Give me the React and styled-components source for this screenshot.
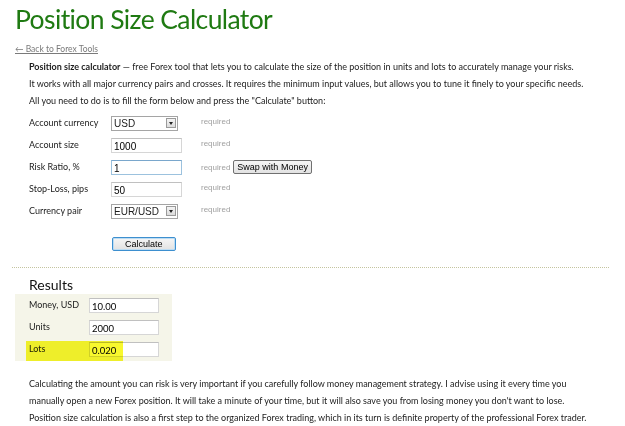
import React from 'react';
import styled, { createGlobalStyle } from 'styled-components';

const GlobalStyle = createGlobalStyle`
  body {
    margin: 0;
    background: #fff;
    font-family: Lato, 'DejaVu Sans', sans-serif;
    color: #1c1c1c;
  }
`;

const Page = styled.div`
  width: 625px;
  height: 426px;
  overflow: hidden;
  padding: 0 0 0 15px;
  box-sizing: border-box;
`;

const Title = styled.h1`
  margin: 0;
  padding-top: 2px;
  font-size: 26.5px;
  letter-spacing: -0.6px;
  font-weight: normal;
  line-height: 34px;
  color: #1f7a12;
`;

const BackLink = styled.a`
  display: inline-block;
  margin-top: 1px;
  font-size: 8.5px;
  line-height: 12px;
  color: #7a7a7a;
  text-decoration: underline;
`;

const Content = styled.div`
  padding-left: 14px;
`;

const Intro = styled.p`
  margin: 3px 0 0;
  font-size: 9px;
  line-height: 17px;
  white-space: nowrap;
  b {
    font-weight: bold;
  }
`;

const Form = styled.div`
  margin-top: 3px;
  display: grid;
  grid-template-columns: 82px 90px auto;
  grid-auto-rows: 22px;
  align-items: center;
`;

const Label = styled.div`
  font-size: 9px;
  margin-top: -2px;
`;

const Field = styled.div`
  display: flex;
  align-items: center;
`;

const Required = styled.div`
  display: flex;
  align-items: center;
  gap: 3px;
  font-family: 'Liberation Sans', sans-serif;
  font-size: 8px;
  color: #a0a0a0;
  span {
    margin-top: ${(p) => (p.$withButton ? '1px' : '-4px')};
  }
`;

const TextInput = styled.div`
  width: ${(p) => p.$width || 71}px;
  height: 15px;
  box-sizing: border-box;
  border: 1px solid ${(p) => (p.$focus ? '#9cc2de' : '#d6d6d6')};
  border-top-color: ${(p) => (p.$focus ? '#7aa7cc' : '#c0c0c0')};
  background: #fff;
  font-family: ${(p) => (p.$body ? 'Lato, sans-serif' : "'Liberation Sans', Arial, sans-serif")};
  font-size: ${(p) => (p.$body ? 9.5 : 10)}px;
  line-height: 15px;
  padding-left: 2px;
  color: #000;
`;

const Select = styled.div`
  width: 67px;
  height: 15px;
  box-sizing: border-box;
  border: 1px solid #a5a5a5;
  background: #fff;
  display: flex;
  align-items: center;
  justify-content: space-between;
  font-family: 'Liberation Sans', Arial, sans-serif;
  font-size: 10px;
  padding-left: 2px;
  padding-right: 1px;
`;

const Arrow = styled.div`
  width: 10px;
  height: 10px;
  box-sizing: border-box;
  border: 1px solid #9a9a9a;
  background: linear-gradient(#f4f4f4, #dcdcdc);
  display: flex;
  align-items: center;
  justify-content: center;
  &::after {
    content: '';
    border-left: 2.5px solid transparent;
    border-right: 2.5px solid transparent;
    border-top: 3px solid #222;
  }
`;

const Button = styled.button`
  height: 14px;
  padding: 0 ${(p) => p.$pad || 3}px;
  font-family: 'Liberation Sans', Arial, sans-serif;
  font-size: 9px;
  line-height: 12px;
  color: #000;
  background: linear-gradient(#f6f6f6, #e2e2e2);
  border: 1px solid ${(p) => (p.$focus ? '#3d8fcf' : '#707070')};
  border-radius: 2px;
  box-shadow: ${(p) => (p.$focus ? 'inset 0 0 0 1px #bcdcf3' : 'none')};
  cursor: pointer;
`;

const Actions = styled.div`
  margin-top: 9px;
  padding-left: 83px;
`;

const Divider = styled.hr`
  margin: 16px 16px 0 -3px;
  border: none;
  border-top: 1px dotted #c4c4a0;
  height: 0;
`;

const ResultsTitle = styled.h2`
  margin: 8px 0 0 14px;
  font-size: 14px;
  font-weight: normal;
  line-height: 18px;
  color: #111;
`;

const ResultsBox = styled.div`
  position: relative;
  width: 157px;
  background: #f5f5e9;
  padding: 0 0 0 14px;
  box-sizing: border-box;
  height: 67px;
  display: grid;
  grid-template-columns: 60px 70px;
  grid-auto-rows: 22px;
  align-items: center;
`;

const ResultLabel = styled.div`
  font-size: 9px;
  margin-top: -1px;
`;

const Highlight = styled.div`
  position: absolute;
  left: 11px;
  top: 47px;
  width: 97px;
  height: 20px;
  background: #f8f82e;
  mix-blend-mode: multiply;
  pointer-events: none;
`;

const Outro = styled.p`
  margin: 14px 0 0 14px;
  font-size: 9px;
  line-height: 17px;
  white-space: nowrap;
`;

const rows = [
  { label: 'Account currency', select: 'USD' },
  { label: 'Account size', value: '1000' },
  { label: 'Risk Ratio, %', value: '1', focus: true, swap: true },
  { label: 'Stop-Loss, pips', value: '50' },
  { label: 'Currency pair', select: 'EUR/USD' },
];

const results = [
  { label: 'Money, USD', value: '10.00' },
  { label: 'Units', value: '2000' },
  { label: 'Lots', value: '0.020' },
];

const App = () => (
  <Page>
    <GlobalStyle />
    <Title>Position Size Calculator</Title>
    <BackLink>&larr; Back to Forex Tools</BackLink>
    <Content>
      <Intro>
        <b>Position size calculator</b> &mdash; free Forex tool that lets you to calculate the size
        of the position in units and lots to accurately manage your risks.
        <br />
        It works with all major currency pairs and crosses. It requires the minimum input values,
        but allows you to tune it finely to your specific needs.
        <br />
        All you need to do is to fill the form below and press the "Calculate" button:
      </Intro>
      <Form>
        {rows.map((r) => (
          <React.Fragment key={r.label}>
            <Label>{r.label}</Label>
            <Field>
              {r.select ? (
                <Select>
                  {r.select}
                  <Arrow />
                </Select>
              ) : (
                <TextInput $focus={r.focus}>{r.value}</TextInput>
              )}
            </Field>
            <Required $withButton={r.swap}>
              <span>required</span>
              {r.swap && <Button>Swap with Money</Button>}
            </Required>
          </React.Fragment>
        ))}
      </Form>
      <Actions>
        <Button $focus $pad={12}>Calculate</Button>
      </Actions>
    </Content>
    <Divider />
    <ResultsTitle>Results</ResultsTitle>
    <ResultsBox>
      {results.map((r) => (
        <React.Fragment key={r.label}>
          <ResultLabel>{r.label}</ResultLabel>
          <TextInput $width={70} $body>{r.value}</TextInput>
        </React.Fragment>
      ))}
      <Highlight />
    </ResultsBox>
    <Outro>
      Calculating the amount you can risk is very important if you carefully follow money
      management strategy. I advise using it every time you
      <br />
      manually open a new Forex position. It will take a minute of your time, but it will also
      save you from losing money you don't want to lose.
      <br />
      Position size calculation is also a first step to the organized Forex trading, which in its
      turn is definite property of the professional Forex trader.
    </Outro>
  </Page>
);

export default App;
